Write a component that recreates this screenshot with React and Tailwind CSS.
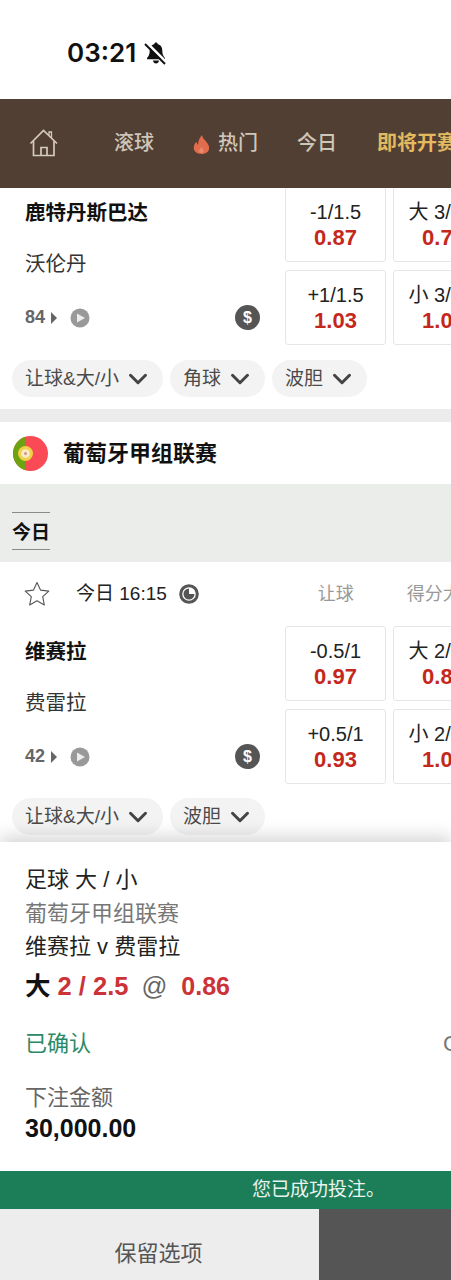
import React from "react";
import { ChevronDown } from "lucide-react";

const FONT = { fontFamily: '"Liberation Sans", "Noto Sans CJK SC", sans-serif' };

function BellMuted() {
  return (
    <svg width="24" height="24" viewBox="0 0 24 24" className="ml-[8px] shrink-0">
      <path d="M12 1.500c1 0 1.600.7 1.700 1.600 3 .8 4.600 3.300 4.600 6.400 0 3.600.8 5.500 2.700 7.500v1.200H3v-1.200c1.900-2 2.700-3.900 2.700-7.500 0-3.100 1.600-5.600 4.600-6.400.1-.9.7-1.600 1.700-1.600z" fill="#111" />
      <path d="M9 19.500h6c-.2 1.800-1.400 3-3 3s-2.800-1.200-3-3z" fill="#111" />
      <path d="M2.500 1.500l20 20" stroke="#fff" strokeWidth="2.600" />
      <path d="M1 3l20 20" stroke="#111" strokeWidth="2" />
    </svg>
  );
}

function HomeIcon() {
  return (
    <svg width="30" height="28" viewBox="0 0 30 28" fill="none" stroke="#d3cabe" strokeWidth="1.700" className="shrink-0">
      <path d="M1.500 14.500L14.500 1.500 28 14.500" />
      <path d="M20 6.500V3h2.500v6" strokeWidth="1.300" />
      <path d="M4.500 12v14.500h20.500V12" />
      <path d="M12 26.500v-8h6v8" />
    </svg>
  );
}

function Flame() {
  return (
    <svg width="17" height="19" viewBox="0 0 17 20" className="shrink-0 ml-[1px]">
      <path d="M9 0c.5 3.500 2.500 4.500 4.500 7 2 2.400 3.200 4.600 3 7.200C16.200 17.600 13 20 8.500 20S.6 17.600.4 14c-.2-2.800 1.200-5 2.900-6.800.2 1.500.8 2.500 1.700 3C4.800 6.500 6.500 3 9 0z" fill="#e26c4e" />
      <path d="M8.500 12c.4 1.600 2.400 2.500 2.400 4.500 0 1.400-1 2.400-2.500 2.400s-2.400-1-2.400-2.400c0-1.800 2-2.700 2.500-4.500z" fill="#e98a6e" />
    </svg>
  );
}

function PlayDot() {
  return (
    <svg width="20" height="20" viewBox="0 0 20 20" className="shrink-0">
      <circle cx="10" cy="10" r="9.500" fill="#999" />
      <path d="M7 5.500l8 4.500-8 4.500z" fill="#ececec" />
    </svg>
  );
}

function Flag() {
  return (
    <svg width="35" height="35" viewBox="0 0 35 35" className="shrink-0">
      <circle cx="17.500" cy="17.500" r="17.500" fill="#f94a55" />
      <path d="M12.500 .7A17.500 17.500 0 0 0 12.500 34.300z" fill="#6da213" />
      <circle cx="12.500" cy="17.500" r="7.500" fill="#f0d24a" />
      <circle cx="12.500" cy="17.500" r="4.300" fill="#f6eccb" />
      <circle cx="12.500" cy="17.500" r="1.500" fill="#d98f80" />
    </svg>
  );
}

function Star() {
  return (
    <svg width="26" height="26" viewBox="0 0 26 26" fill="none" stroke="#555" strokeWidth="1.100" strokeLinejoin="round" className="shrink-0">
      <path d="M13 1.500l3.500 7.600 8.300 1-6.100 5.600 1.600 8.200-7.300-4.100-7.300 4.100 1.600-8.200-6.100-5.600 8.300-1z" />
    </svg>
  );
}

function ClockIcon() {
  return (
    <svg width="20" height="20" viewBox="0 0 20 20" className="ml-[12px] shrink-0">
      <circle cx="10" cy="10" r="8.300" fill="none" stroke="#555" strokeWidth="3" />
      <path d="M10 4.500A5.500 5.500 0 1 0 15.500 10H10z" fill="#555" />
    </svg>
  );
}

function OddsBox({ line, price }) {
  return (
    <div className="w-[101px] h-[75px] shrink-0 flex flex-col items-center pt-[12px] bg-white border border-[#e6e6e6] rounded-[3px]">
      <div className="text-[20px] leading-[25px] text-[#222] whitespace-nowrap">{line}</div>
      <div className="text-[22px] leading-[26px] font-bold text-[#c4281c] whitespace-nowrap">{price}</div>
    </div>
  );
}

function Chip({ label }) {
  return (
    <div className="h-[37px] pl-[13px] pr-[10px] pt-[1px] flex items-center gap-[4px] rounded-full bg-[#f3f3f3] text-[19px] text-[#4a4a4a] whitespace-nowrap">
      {label}
      <ChevronDown size={30} strokeWidth={2.4} color="#444" className="shrink-0" />
    </div>
  );
}

function MatchRows({ home, away, minute, rows, className = "" }) {
  return (
    <div className={`flex pl-[25px] ${className}`}>
      <div className="w-[260px] shrink-0 h-[158px] flex flex-col pt-[1px]">
        <div className="h-[50px] flex items-center text-[20.5px] font-bold text-[#111]">{home}</div>
        <div className="h-[52px] flex items-center text-[20.5px] text-[#333]">{away}</div>
        <div className="h-[55px] flex items-center text-[18px] font-bold text-[#666]">
          {minute}
          <span className="ml-[6px] w-0 h-0 border-y-[6px] border-y-transparent border-l-[6px] border-l-[#666]" />
          <span className="ml-[13px]"><PlayDot /></span>
          <span className="ml-auto mr-[25px] w-[25px] h-[25px] rounded-full bg-[#555] text-white text-[16px] font-bold flex items-center justify-center">$</span>
        </div>
      </div>
      <div className="grid grid-cols-[101px_101px] gap-x-[7px] gap-y-[8px] shrink-0">
        {rows.map((o, i) => (
          <OddsBox key={i} line={o[0]} price={o[1]} />
        ))}
      </div>
    </div>
  );
}

export default function App() {
  return (
    <div className="w-[451px] h-[1280px] overflow-hidden bg-white flex flex-col" style={FONT}>
      {/* status bar */}
      <div className="h-[99px] shrink-0 pl-[67px] pt-[36px] flex items-start">
        <span className="text-[26px] leading-[34px] font-semibold text-[#111]" style={{ fontFamily: "Inter, sans-serif" }}>03:21</span>
        <span className="mt-[5px]"><BellMuted /></span>
      </div>

      {/* nav */}
      <div className="h-[89px] shrink-0 bg-[#523f34] flex items-center text-[20px] font-medium text-[#cfc6ba] whitespace-nowrap relative z-10 pl-[29px] pb-[1px]">
        <HomeIcon />
        <span className="ml-[55px]">滚球</span>
        <span className="ml-[38px] mt-[3px]"><Flame /></span>
        <span className="ml-[8px]">热门</span>
        <span className="ml-[39px]">今日</span>
        <span className="ml-[40px] text-[#e2b95f] font-bold">即将开赛</span>
      </div>

      {/* first match, scrolled under the nav */}
      <div className="h-[221px] shrink-0">
        <MatchRows
          className="-mt-px"
          home="鹿特丹斯巴达"
          away="沃伦丹"
          minute="84"
          rows={[["-1/1.5", "0.87"], ["大 3/3.5", "0.77"], ["+1/1.5", "1.03"], ["小 3/3.5", "1.05"]]}
        />
        <div className="flex gap-[7px] pl-[12px] mt-[15px]">
          <Chip label="让球&大/小" />
          <Chip label="角球" />
          <Chip label="波胆" />
        </div>
      </div>

      <div className="h-[13px] shrink-0 bg-[#ececec]" />

      {/* league */}
      <div className="h-[62px] shrink-0 pl-[13px] flex items-center gap-[15px] text-[22px] font-bold text-[#111]">
        <Flag />
        葡萄牙甲组联赛
      </div>

      <div className="h-[78px] shrink-0 bg-[#ebedeb] pl-[12px] pt-[28px]">
        <div className="w-[38px] h-[38px] pt-[5px] border-y border-[#8a8a8a] flex items-center justify-center text-[19px] font-bold text-[#111]">今日</div>
      </div>

      {/* second match */}
      <div className="h-[280px] shrink-0">
        <div className="h-[64px] flex items-center pl-[24px] text-[19px] text-[#222] whitespace-nowrap">
          <Star />
          <span className="ml-[26px]">今日 16:15</span>
          <ClockIcon />
          <span className="ml-[119px] text-[18px] text-[#999]">让球</span>
          <span className="ml-[53px] text-[18px] text-[#999]">得分大小</span>
        </div>
        <MatchRows
          home="维赛拉"
          away="费雷拉"
          minute="42"
          rows={[["-0.5/1", "0.97"], ["大 2/2.5", "0.86"], ["+0.5/1", "0.93"], ["小 2/2.5", "1.04"]]}
        />
        <div className="flex gap-[7px] pl-[12px] mt-[14px]">
          <Chip label="让球&大/小" />
          <Chip label="波胆" />
        </div>
      </div>

      {/* bet receipt */}
      <div className="h-[329px] shrink-0 bg-white relative z-10 shadow-[0_-6px_16px_rgba(0,0,0,0.16)] pl-[25px] pt-[21px]">
        <div className="text-[22px] leading-[34px] text-[#222]">足球 大 / 小</div>
        <div className="text-[22px] leading-[33px] text-[#777]">葡萄牙甲组联赛</div>
        <div className="text-[22px] leading-[34px] text-[#222]">维赛拉 v 费雷拉</div>
        <div className="mt-[5px] flex items-center text-[25.5px] leading-[34px] font-bold whitespace-nowrap">
          <span className="text-[#111]">大</span>
          <span className="ml-[7px] text-[#cc3338]">2 / 2.5</span>
          <span className="ml-[13px] font-normal text-[#666]">@</span>
          <span className="ml-[14px] text-[25px] text-[#cc3338]">0.86</span>
        </div>
        <div className="mt-[24px] flex text-[22px] leading-[34px] text-[#2a8a66]">
          已确认
          <span className="absolute left-[443px] text-[#777] whitespace-nowrap">Cash</span>
        </div>
        <div className="mt-[20px] text-[22px] leading-[34px] text-[#666]">下注金额</div>
        <div className="-mt-px text-[25px] leading-[28px] font-bold text-[#111]">30,000.00</div>
      </div>

      <div className="h-[38px] shrink-0 bg-[#1c7d59] flex items-center pl-[252px] text-[19px] text-[#e8f3ee] whitespace-nowrap relative z-10">
        您已成功投注。
      </div>

      <div className="h-[71px] shrink-0 flex relative z-10">
        <div className="w-[319px] bg-[#ecedec] flex items-center justify-center pt-[17px] pr-[2px] text-[22px] text-[#555]">保留选项</div>
        <div className="flex-1 bg-[#555555]" />
      </div>
    </div>
  );
}
